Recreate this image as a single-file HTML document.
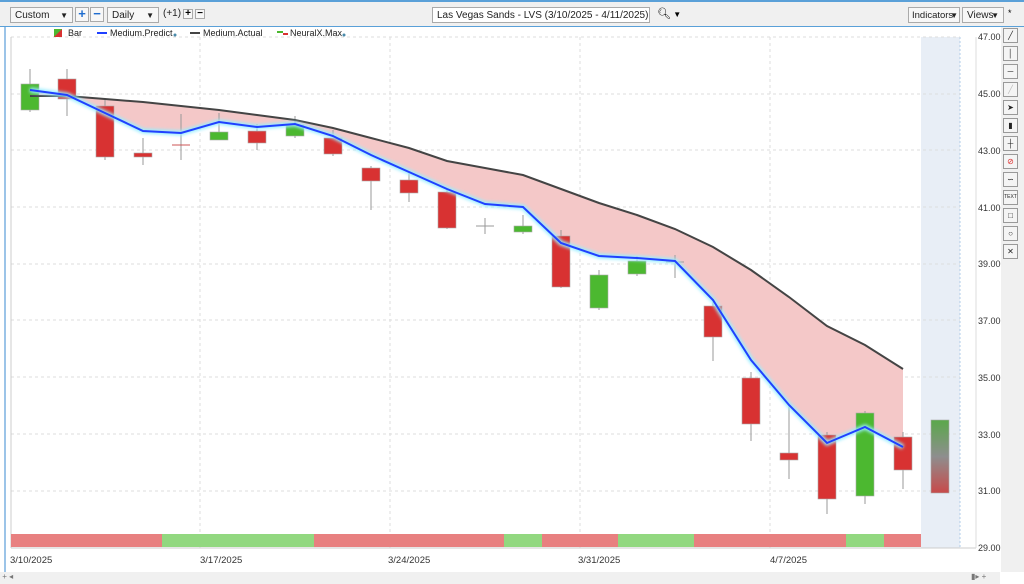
<!DOCTYPE html>
<html><head><meta charset="utf-8"><style>
body{margin:0;width:1024px;height:584px;overflow:hidden;background:#fff;font-family:"Liberation Sans",sans-serif;position:relative}
.tb{position:absolute;left:0;top:0;width:1024px;height:26px;background:#f0f0f0;border-top:2px solid #5aa0d8;box-sizing:border-box}
.sel{position:absolute;top:5px;height:16px;border:1px solid #aaa;background:#f7f7f7;font-size:10px;line-height:15px;padding-left:4px;box-sizing:border-box;color:#222;white-space:nowrap;overflow:hidden}
.sel i{position:absolute;right:4px;top:0;font-style:normal;font-size:8px}
.btn{position:absolute;top:5px;width:14px;height:15px;border:1px solid #aaa;background:#f7f7f7;box-sizing:border-box;text-align:center;font-size:13px;line-height:12px;font-weight:bold;color:#1e6ccf}
.ax{position:absolute;left:978px;font-size:9px;color:#333}
.tool{position:absolute;left:1003px;width:15px;height:15px;border:1px solid #999;background:#f4f4f4;box-sizing:border-box;font-size:8px;text-align:center;line-height:13px;color:#222}
.dt{position:absolute;top:555px;font-size:9.5px;color:#333}
</style></head><body>
<div class="tb">
<div class="sel" style="left:10px;width:63px">Custom<i>▼</i></div>
<div class="btn" style="left:75px">+</div>
<div class="btn" style="left:90px">−</div>
<div class="sel" style="left:107px;width:52px">Daily<i>▼</i></div>
<div style="position:absolute;left:163px;top:6px;font-size:10px;color:#222">(+1)</div>
<div class="btn" style="left:183px;width:10px;height:10px;top:7px;color:#000;font-size:10px;line-height:8px">+</div>
<div class="btn" style="left:195px;width:10px;height:10px;top:7px;color:#000;font-size:10px;line-height:8px">−</div>
<div class="sel" style="left:432px;width:218px;background:#fff;font-size:10px">Las Vegas Sands - LVS (3/10/2025 - 4/11/2025)</div>
<div style="position:absolute;left:657px;top:5px;font-size:11px">🔍&#xFE0E;<span style="font-size:8px"> ▼</span></div>
<div class="sel" style="left:908px;width:52px;font-size:9.5px;padding-left:3px">Indicators<i style="right:1px">▼</i></div>
<div class="sel" style="left:962px;width:42px">Views<i>▼</i></div>
<div style="position:absolute;left:1008px;top:6px;font-size:9px">*</div>
</div>
<div style="position:absolute;left:4px;top:26px;width:2px;height:550px;background:#9cc4e8"></div>
<div style="position:absolute;left:0;top:26px;width:1024px;height:1px;background:#5aa0d8"></div>
<div style="position:absolute;left:0;top:572px;width:1000px;height:12px;background:#f0f0f0;font-size:8px;color:#777">&nbsp;+ ◂<span style="position:absolute;left:971px">▮▸ +</span></div>
<svg width="1024" height="584" style="position:absolute;left:0;top:0" xmlns="http://www.w3.org/2000/svg">
<defs><linearGradient id="g" x1="0" y1="0" x2="0" y2="1"><stop offset="0" stop-color="#5aa84a"/><stop offset=".5" stop-color="#8e8e8e"/><stop offset="1" stop-color="#c84a4a"/></linearGradient>
<filter id="gl"><feGaussianBlur stdDeviation="1.5"/></filter></defs>
<rect x="921" y="37" width="39" height="511" fill="#e8eef6"/>
<line x1="960" y1="37" x2="960" y2="548" stroke="#b0cce8" stroke-dasharray="2,2"/>
<g stroke="#ddd" stroke-dasharray="3,3">
<line x1="11" y1="37" x2="960" y2="37"/><line x1="11" y1="94" x2="960" y2="94"/><line x1="11" y1="150" x2="960" y2="150"/><line x1="11" y1="207" x2="960" y2="207"/><line x1="11" y1="264" x2="960" y2="264"/><line x1="11" y1="320" x2="960" y2="320"/><line x1="11" y1="377" x2="960" y2="377"/><line x1="11" y1="434" x2="960" y2="434"/><line x1="11" y1="491" x2="960" y2="491"/>
<line x1="200" y1="37" x2="200" y2="548"/><line x1="390" y1="37" x2="390" y2="548"/><line x1="580" y1="37" x2="580" y2="548"/><line x1="770" y1="37" x2="770" y2="548"/>
</g>
<line x1="11" y1="37" x2="11" y2="548" stroke="#ccc"/>
<polygon fill="#f4c8c8" points="30,96 67,96 105,99 143,102 181,106 219,110 257,115 295,120 333,128 371,138 409,148 447,161 485,168 523,175 561,189 599,203 637,215 675,229 713,247 751,270 789,297 827,326 865,345 903,369 903,447 865,427 827,443 789,405 751,360 713,300 675,261 637,258 599,256 561,243 523,207 485,204 447,189 409,172 371,155 333,136 295,124 257,127 219,122 181,133 143,131 105,113 67,95 30,90"/>
<g stroke="#999" stroke-width="1">
<line x1="30" y1="69" x2="30" y2="112"/><line x1="67" y1="69" x2="67" y2="116"/><line x1="105" y1="100" x2="105" y2="160"/><line x1="143" y1="138" x2="143" y2="165"/><line x1="181" y1="114" x2="181" y2="160"/><line x1="219" y1="113" x2="219" y2="140"/><line x1="257" y1="124" x2="257" y2="150"/><line x1="295" y1="116" x2="295" y2="138"/><line x1="333" y1="130" x2="333" y2="156"/><line x1="371" y1="166" x2="371" y2="210"/><line x1="409" y1="172" x2="409" y2="202"/><line x1="447" y1="188" x2="447" y2="229"/><line x1="485" y1="218" x2="485" y2="234"/><line x1="523" y1="215" x2="523" y2="234"/><line x1="561" y1="230" x2="561" y2="288"/><line x1="599" y1="270" x2="599" y2="310"/><line x1="637" y1="256" x2="637" y2="276"/><line x1="675" y1="255" x2="675" y2="278"/><line x1="713" y1="300" x2="713" y2="361"/><line x1="751" y1="372" x2="751" y2="441"/><line x1="789" y1="405" x2="789" y2="479"/><line x1="827" y1="432" x2="827" y2="514"/><line x1="865" y1="411" x2="865" y2="504"/><line x1="903" y1="432" x2="903" y2="489"/>
<line x1="172" y1="145" x2="190" y2="145" stroke="#c55"/><line x1="476" y1="226" x2="494" y2="226"/><line x1="666" y1="262" x2="684" y2="262"/>
</g>
<g stroke="#aaa" stroke-width="0.6">
<rect x="21" y="84" width="18" height="26" fill="#4cb830"/>
<rect x="58" y="79" width="18" height="20" fill="#d83232"/>
<rect x="96" y="106" width="18" height="51" fill="#d83232"/>
<rect x="134" y="153" width="18" height="4" fill="#d83232"/>
<rect x="210" y="132" width="18" height="8" fill="#4cb830"/>
<rect x="248" y="131" width="18" height="12" fill="#d83232"/>
<rect x="286" y="125" width="18" height="11" fill="#4cb830"/>
<rect x="324" y="138" width="18" height="16" fill="#d83232"/>
<rect x="362" y="168" width="18" height="13" fill="#d83232"/>
<rect x="400" y="180" width="18" height="13" fill="#d83232"/>
<rect x="438" y="192" width="18" height="36" fill="#d83232"/>
<rect x="514" y="226" width="18" height="6" fill="#4cb830"/>
<rect x="552" y="236" width="18" height="51" fill="#d83232"/>
<rect x="590" y="275" width="18" height="33" fill="#4cb830"/>
<rect x="628" y="261" width="18" height="13" fill="#4cb830"/>
<rect x="704" y="306" width="18" height="31" fill="#d83232"/>
<rect x="742" y="378" width="18" height="46" fill="#d83232"/>
<rect x="780" y="453" width="18" height="7" fill="#d83232"/>
<rect x="818" y="435" width="18" height="64" fill="#d83232"/>
<rect x="856" y="413" width="18" height="83" fill="#4cb830"/>
<rect x="894" y="437" width="18" height="33" fill="#d83232"/>
<rect x="931" y="420" width="18" height="73" fill="url(#g)"/>
</g>
<polyline fill="none" stroke="#444" stroke-width="2" points="30,96 67,96 105,99 143,102 181,106 219,110 257,115 295,120 333,128 371,138 409,148 447,161 485,168 523,175 561,189 599,203 637,215 675,229 713,247 751,270 789,297 827,326 865,345 903,369"/>
<polyline fill="none" stroke="#9ef" stroke-width="5" filter="url(#gl)" points="30,90 67,95 105,113 143,131 181,133 219,122 257,127 295,124 333,136 371,155 409,172 447,189 485,204 523,207 561,243 599,256 637,258 675,261 713,300 751,360 789,405 827,443 865,427 903,447"/>
<polyline fill="none" stroke="#2040ff" stroke-width="2" points="30,90 67,95 105,113 143,131 181,133 219,122 257,127 295,124 333,136 371,155 409,172 447,189 485,204 523,207 561,243 599,256 637,258 675,261 713,300 751,360 789,405 827,443 865,427 903,447"/>
<g>
<rect x="11" y="534" width="151" height="13" fill="#e88080"/><rect x="162" y="534" width="152" height="13" fill="#92d880"/><rect x="314" y="534" width="190" height="13" fill="#e88080"/><rect x="504" y="534" width="38" height="13" fill="#92d880"/><rect x="542" y="534" width="76" height="13" fill="#e88080"/><rect x="618" y="534" width="76" height="13" fill="#92d880"/><rect x="694" y="534" width="152" height="13" fill="#e88080"/><rect x="846" y="534" width="38" height="13" fill="#92d880"/><rect x="884" y="534" width="37" height="13" fill="#e88080"/>
</g>
<line x1="11" y1="548" x2="976" y2="548" stroke="#ccc"/>
<line x1="976" y1="37" x2="976" y2="548" stroke="#ddd"/>
<rect x="1001" y="27" width="23" height="545" fill="#f0f0f0"/>
<rect x="54" y="29" width="8" height="8" fill="#4cb830"/><polygon points="62,29 62,37 54,37" fill="#d83232"/>
<line x1="97" y1="33" x2="107" y2="33" stroke="#2040ff" stroke-width="2"/>
<line x1="190" y1="33" x2="200" y2="33" stroke="#444" stroke-width="2"/>
<line x1="277" y1="32" x2="283" y2="32" stroke="#4cb830" stroke-width="2"/><line x1="283" y1="34" x2="288" y2="34" stroke="#d83232" stroke-width="2"/>
<circle cx="175" cy="35" r="1.5" fill="#4a8aaa"/><circle cx="344" cy="35" r="1.5" fill="#4a8aaa"/>
</svg>
<div style="position:absolute;left:68px;top:28px;font-size:9px;color:#222">Bar</div>
<div style="position:absolute;left:110px;top:28px;font-size:9px;color:#222">Medium.Predict</div>
<div style="position:absolute;left:203px;top:28px;font-size:9px;color:#222">Medium.Actual</div>
<div style="position:absolute;left:290px;top:28px;font-size:9px;color:#222">NeuralX.Max</div>
<div class="ax" style="top:32px">47.00</div><div class="ax" style="top:89px">45.00</div><div class="ax" style="top:146px">43.00</div><div class="ax" style="top:203px">41.00</div><div class="ax" style="top:259px">39.00</div><div class="ax" style="top:316px">37.00</div><div class="ax" style="top:373px">35.00</div><div class="ax" style="top:430px">33.00</div><div class="ax" style="top:486px">31.00</div><div class="ax" style="top:543px">29.00</div>
<div class="dt" style="left:10px">3/10/2025</div><div class="dt" style="left:200px">3/17/2025</div><div class="dt" style="left:388px">3/24/2025</div><div class="dt" style="left:578px">3/31/2025</div><div class="dt" style="left:770px">4/7/2025</div>
<div class="tool" style="top:28px">╱</div><div class="tool" style="top:46px">│</div><div class="tool" style="top:64px">─</div><div class="tool" style="top:82px;color:#bbb">╱</div><div class="tool" style="top:100px">➤</div><div class="tool" style="top:118px">▮</div><div class="tool" style="top:136px">┼</div><div class="tool" style="top:154px;color:#d33">⊘</div><div class="tool" style="top:172px">∽</div><div class="tool" style="top:190px;font-size:5px">TEXT</div><div class="tool" style="top:208px">□</div><div class="tool" style="top:226px">○</div><div class="tool" style="top:244px">✕</div>
</body></html>
